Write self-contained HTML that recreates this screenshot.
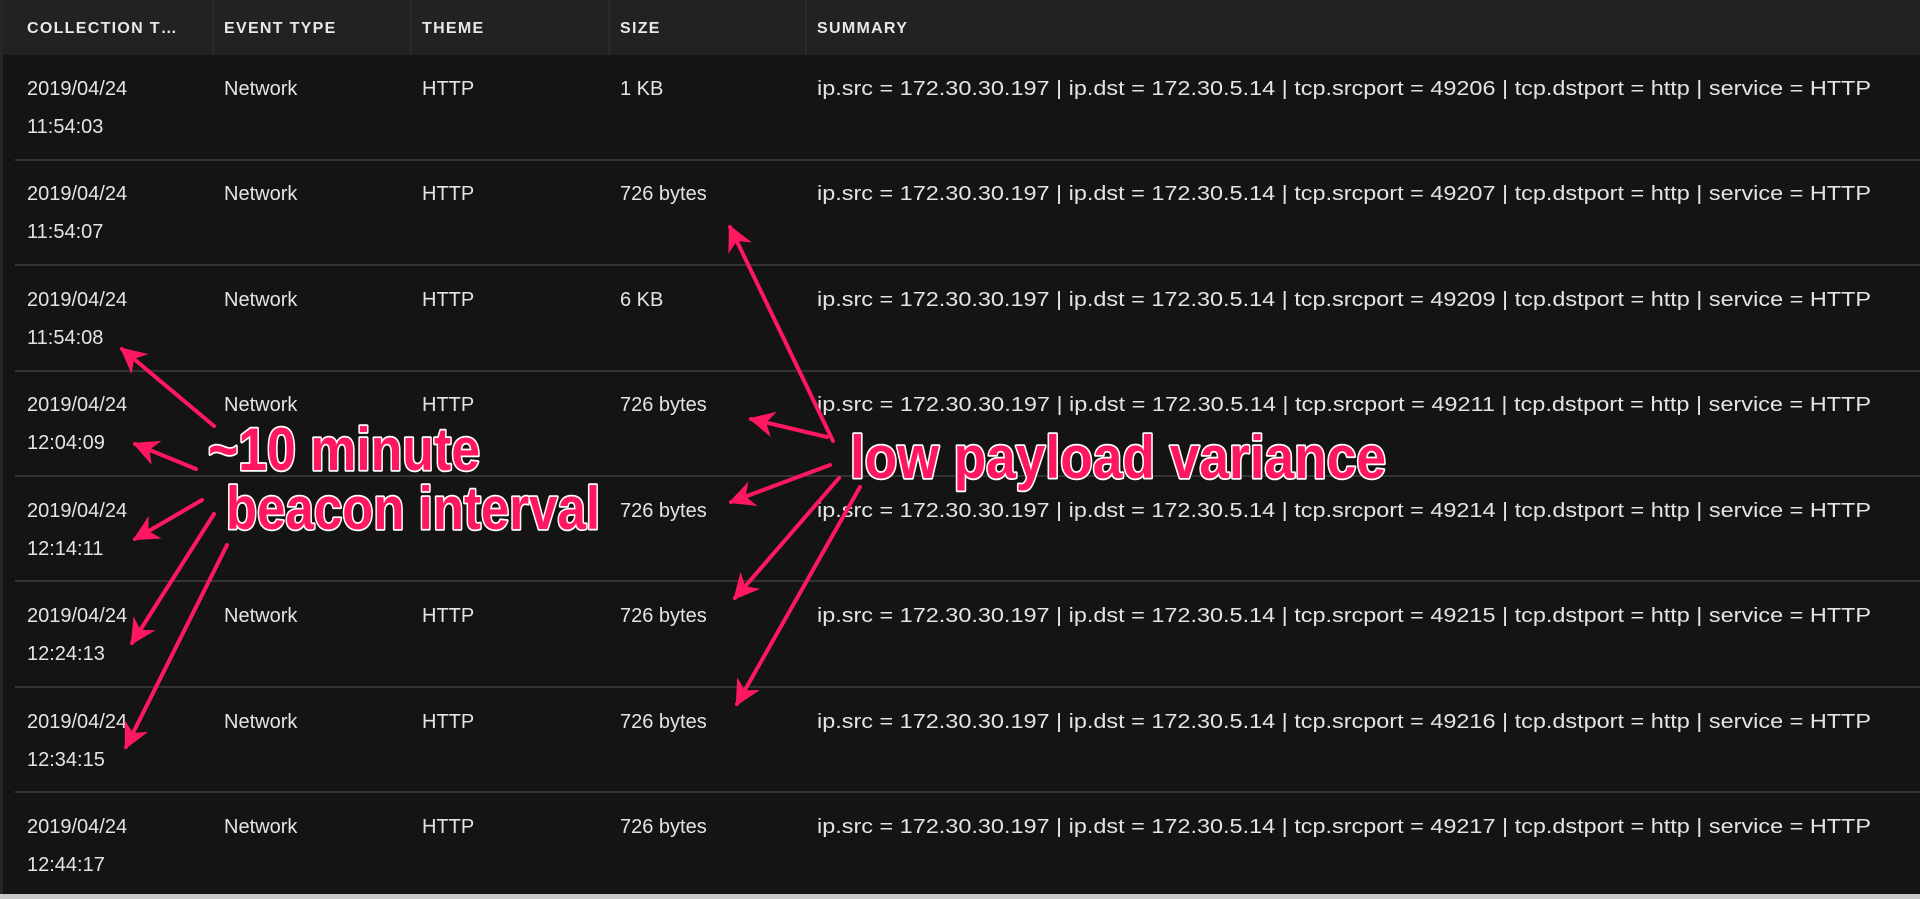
<!DOCTYPE html>
<html><head><meta charset="utf-8"><style>
html,body{margin:0;padding:0;background:#141414;width:1920px;height:899px;overflow:hidden}
svg{display:block}
.h{font-family:"Liberation Sans",sans-serif;font-weight:bold;font-size:16px;fill:#e8e8e8;letter-spacing:1.3px}
.t{font-family:"Liberation Sans",sans-serif;font-size:20px;fill:#e4e4e4}
.a{font-family:"Liberation Sans",sans-serif;font-weight:bold;font-size:60px;fill:#ff1760;stroke:#fff;stroke-width:3.5px;paint-order:stroke;stroke-linejoin:round}
</style></head><body>
<svg width="1920" height="899" viewBox="0 0 1920 899" xmlns="http://www.w3.org/2000/svg">
<defs>
<marker id="m" viewBox="0 0 10 10" refX="9" refY="5" markerWidth="6.5" markerHeight="6.5" orient="auto-start-reverse" markerUnits="strokeWidth">
<path d="M0,0 L10,5 L0,10 L3,5 z" fill="#ff1760"/></marker>
</defs>
<rect x="0" y="0" width="1920" height="899" fill="#141414"/>
<rect x="0" y="0" width="1920" height="55" fill="#222"/>
<rect x="0" y="0" width="3" height="899" fill="#262626"/>
<g stroke="#333" stroke-width="1">
<line x1="213" y1="0" x2="213" y2="55"/><line x1="411" y1="0" x2="411" y2="55"/>
<line x1="609" y1="0" x2="609" y2="55"/><line x1="806" y1="0" x2="806" y2="55"/>
</g>
<text class="h" x="27" y="33">COLLECTION T…</text>
<text class="h" x="224" y="33">EVENT TYPE</text>
<text class="h" x="422" y="33">THEME</text>
<text class="h" x="620" y="33">SIZE</text>
<text class="h" x="817" y="33">SUMMARY</text>
<g stroke="#333" stroke-width="2">
<line x1="15" y1="160" x2="1920" y2="160"/><line x1="15" y1="265" x2="1920" y2="265"/>
<line x1="15" y1="371" x2="1920" y2="371"/><line x1="15" y1="476" x2="1920" y2="476"/>
<line x1="15" y1="581" x2="1920" y2="581"/><line x1="15" y1="687" x2="1920" y2="687"/>
<line x1="15" y1="792" x2="1920" y2="792"/>
</g>
<rect x="0" y="894" width="1920" height="5" fill="#c8c8c8"/>
<g class="t">
<text x="27" y="95">2019/04/24</text><text x="27" y="133">11:54:03</text><text x="224" y="95">Network</text><text x="422" y="95">HTTP</text><text x="620" y="95">1 KB</text>
<text x="817" y="95" textLength="1054" lengthAdjust="spacingAndGlyphs">ip.src = 172.30.30.197 | ip.dst = 172.30.5.14 | tcp.srcport = 49206 | tcp.dstport = http | service = HTTP</text>

<text x="27" y="200">2019/04/24</text><text x="27" y="238">11:54:07</text><text x="224" y="200">Network</text><text x="422" y="200">HTTP</text><text x="620" y="200">726 bytes</text>
<text x="817" y="200" textLength="1054" lengthAdjust="spacingAndGlyphs">ip.src = 172.30.30.197 | ip.dst = 172.30.5.14 | tcp.srcport = 49207 | tcp.dstport = http | service = HTTP</text>

<text x="27" y="306">2019/04/24</text><text x="27" y="344">11:54:08</text><text x="224" y="306">Network</text><text x="422" y="306">HTTP</text><text x="620" y="306">6 KB</text>
<text x="817" y="306" textLength="1054" lengthAdjust="spacingAndGlyphs">ip.src = 172.30.30.197 | ip.dst = 172.30.5.14 | tcp.srcport = 49209 | tcp.dstport = http | service = HTTP</text>

<text x="27" y="411">2019/04/24</text><text x="27" y="449">12:04:09</text><text x="224" y="411">Network</text><text x="422" y="411">HTTP</text><text x="620" y="411">726 bytes</text>
<text x="817" y="411" textLength="1054" lengthAdjust="spacingAndGlyphs">ip.src = 172.30.30.197 | ip.dst = 172.30.5.14 | tcp.srcport = 49211 | tcp.dstport = http | service = HTTP</text>

<text x="27" y="517">2019/04/24</text><text x="27" y="555">12:14:11</text><text x="620" y="517">726 bytes</text>
<text x="817" y="517" textLength="1054" lengthAdjust="spacingAndGlyphs">ip.src = 172.30.30.197 | ip.dst = 172.30.5.14 | tcp.srcport = 49214 | tcp.dstport = http | service = HTTP</text>

<text x="27" y="622">2019/04/24</text><text x="27" y="660">12:24:13</text><text x="224" y="622">Network</text><text x="422" y="622">HTTP</text><text x="620" y="622">726 bytes</text>
<text x="817" y="622" textLength="1054" lengthAdjust="spacingAndGlyphs">ip.src = 172.30.30.197 | ip.dst = 172.30.5.14 | tcp.srcport = 49215 | tcp.dstport = http | service = HTTP</text>

<text x="27" y="728">2019/04/24</text><text x="27" y="766">12:34:15</text><text x="224" y="728">Network</text><text x="422" y="728">HTTP</text><text x="620" y="728">726 bytes</text>
<text x="817" y="728" textLength="1054" lengthAdjust="spacingAndGlyphs">ip.src = 172.30.30.197 | ip.dst = 172.30.5.14 | tcp.srcport = 49216 | tcp.dstport = http | service = HTTP</text>

<text x="27" y="833">2019/04/24</text><text x="27" y="871">12:44:17</text><text x="224" y="833">Network</text><text x="422" y="833">HTTP</text><text x="620" y="833">726 bytes</text>
<text x="817" y="833" textLength="1054" lengthAdjust="spacingAndGlyphs">ip.src = 172.30.30.197 | ip.dst = 172.30.5.14 | tcp.srcport = 49217 | tcp.dstport = http | service = HTTP</text>
</g>
<g stroke="#ff1760" stroke-width="4" fill="none" marker-end="url(#m)" stroke-linecap="round">
<line x1="214" y1="426" x2="122" y2="349"/>
<line x1="196" y1="469" x2="135" y2="444"/>
<line x1="202" y1="500" x2="135" y2="539"/>
<line x1="214" y1="514" x2="132" y2="643"/>
<line x1="227" y1="545" x2="126" y2="747"/>
<line x1="833" y1="441" x2="730" y2="227"/>
<line x1="827" y1="437" x2="751" y2="419"/>
<line x1="830" y1="465" x2="731" y2="502"/>
<line x1="839" y1="478" x2="735" y2="598"/>
<line x1="860" y1="487" x2="737" y2="704"/>
</g>
<text class="a" x="208" y="470" textLength="272" lengthAdjust="spacingAndGlyphs">~10 minute</text>
<text class="a" x="226" y="529" textLength="374" lengthAdjust="spacingAndGlyphs">beacon interval</text>
<text class="a" x="850" y="478" textLength="536" lengthAdjust="spacingAndGlyphs">low payload variance</text>
</svg>
</body></html>
